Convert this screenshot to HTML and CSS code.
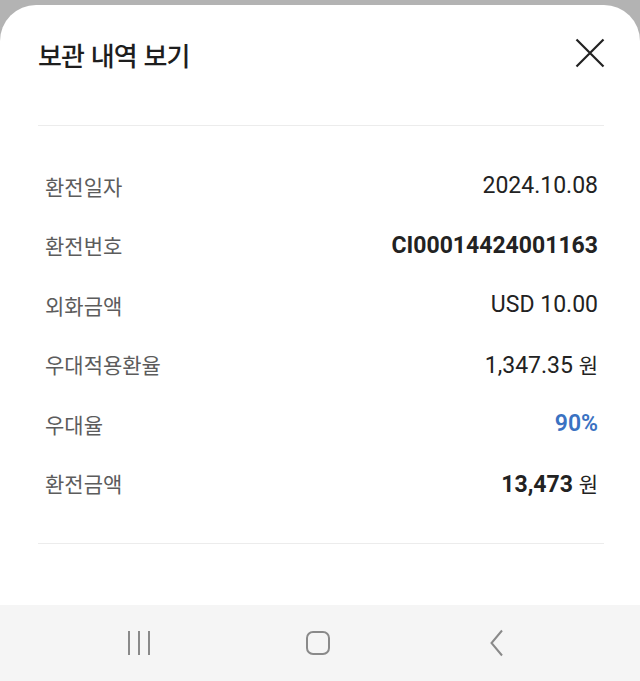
FILE: index.html
```html
<!DOCTYPE html>
<html lang="ko">
<head>
	<meta charset="utf-8">
	<title>보관 내역 보기</title>
	<link rel="stylesheet" href="styles.css">
</head>
<body>
	<div class="sheet">
		<div class="sheet-head">
			<h1 class="sheet-title">보관 내역 보기</h1>
			<button class="close-btn" type="button" aria-label="닫기">
				<svg width="30" height="30" viewBox="0 0 30 30">
					<path d="M1.5 1.5 L28.5 28.5 M28.5 1.5 L1.5 28.5" stroke="#222" stroke-width="2.2" fill="none"/>
				</svg>
			</button>
		</div>

		<dl class="detail-list">
			<div class="detail-row">
				<dt>환전일자</dt>
				<dd>2024.10.08</dd>
			</div>
			<div class="detail-row">
				<dt>환전번호</dt>
				<dd class="strong">CI00014424001163</dd>
			</div>
			<div class="detail-row">
				<dt>외화금액</dt>
				<dd>USD 10.00</dd>
			</div>
			<div class="detail-row">
				<dt>우대적용환율</dt>
				<dd>1,347.35 <span class="unit">원</span></dd>
			</div>
			<div class="detail-row">
				<dt>우대율</dt>
				<dd class="accent">90%</dd>
			</div>
			<div class="detail-row">
				<dt>환전금액</dt>
				<dd><span class="strong">13,473</span> <span class="unit">원</span></dd>
			</div>
		</dl>
	</div>

	<!-- system navigation bar -->
	<div class="nav-bar">
		<span class="nav-icon">
			<svg width="24" height="26" viewBox="0 0 24 26">
				<path d="M2 1 V25 M12 1 V25 M22 1 V25" stroke="#8a8a8a" stroke-width="2" fill="none"/>
			</svg>
		</span>
		<span class="nav-icon">
			<svg width="26" height="26" viewBox="0 0 26 26">
				<rect x="2" y="2" width="22" height="22" rx="6" stroke="#8a8a8a" stroke-width="2" fill="none"/>
			</svg>
		</span>
		<span class="nav-icon">
			<svg width="16" height="28" viewBox="0 0 16 28">
				<path d="M13 1.5 L2.5 14 L13 26.5" stroke="#8a8a8a" stroke-width="2" fill="none"/>
			</svg>
		</span>
	</div>
</body>
</html>
```

FILE: styles.css
```css
body {
	margin: 0;
	padding-top: 5px;
	background-color: #b3b3b3;
	font-family: Roboto, "Noto Sans CJK KR", sans-serif;
	color: #222;
}

/* Bottom sheet */
.sheet {
	height: 600px;
	background-color: #fff;
	border-radius: 36px 36px 0 0;
	box-sizing: border-box;
}

.sheet-head {
	display: flex;
	align-items: center;
	justify-content: space-between;
	height: 121px;
	margin: 0 36px 0 38px;
	padding-bottom: 21px;
	box-sizing: border-box;
	border-bottom: 1px solid #ececec;
}

.sheet-title {
	margin: 0;
	font-family: "Noto Sans CJK KR", sans-serif;
	font-size: 26px;
	font-weight: 500;
	letter-spacing: -0.8px;
	color: #1e1e1e;
}

.close-btn {
	display: flex;
	padding: 0;
	margin: -4px -1px 0 0;
	border: 0;
	background: none;
	cursor: pointer;
}

/* Detail rows */
.detail-list {
	margin: 0 36px 0 38px;
	padding: 30px 6px 30px 7px;
	border-bottom: 1px solid #ececec;
}

.detail-row {
	display: flex;
	align-items: center;
	justify-content: space-between;
	height: 59.5px;
}

.detail-row dt {
	font-family: "Noto Sans CJK KR", sans-serif;
	font-size: 21px;
	color: #5c5c5c;
}

.detail-row dd {
	margin: 0;
	font-size: 23px;
	color: #222;
}

.detail-row .strong {
	font-weight: 700;
}

.detail-row .accent {
	font-weight: 600;
	color: #3a72c2;
}

.unit {
	font-family: "Noto Sans CJK KR", sans-serif;
	font-size: 21px;
	font-weight: 400;
}

/* Navigation bar */
.nav-bar {
	display: flex;
	align-items: center;
	justify-content: center;
	gap: 139px;
	height: 76px;
	padding-right: 4px;
	background-color: #f5f5f5;
}

.nav-icon {
	display: flex;
	justify-content: center;
	width: 40px;
}
```
